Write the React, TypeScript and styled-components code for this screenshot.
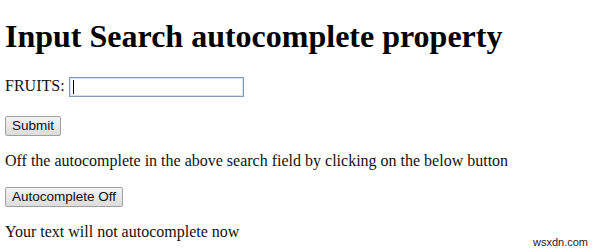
import styled, { createGlobalStyle } from "styled-components";

const GlobalStyle = createGlobalStyle`
  html, body {
    margin: 0;
    background: #fff;
  }
  body {
    font-family: "Liberation Serif", "Times New Roman", serif;
    font-size: 16px;
    color: #111;
  }
`;

const Page = styled.div`
  position: relative;
  width: 600px;
  height: 252px;
  padding: 0 5px;
  box-sizing: border-box;
  overflow: hidden;
`;

const Title = styled.h1`
  font-size: 32px;
  font-weight: bold;
  margin: 0;
  padding-top: 19px;
  line-height: 34px;
  color: #000;
`;

const Para = styled.p<{ $top: number }>`
  margin: ${({ $top }) => $top}px 0 0;
  line-height: 20px;
`;

const FieldWrap = styled.span`
  position: relative;
  display: inline-block;
  vertical-align: middle;
  line-height: 0;
`;

const Field = styled.input`
  box-sizing: border-box;
  width: 175px;
  height: 20px;
  padding: 1px 3px;
  margin: 0;
  border: 1px solid #7f9db9;
  box-shadow: inset 0 0 0 1px #d4e0ec;
  font: 13px "Liberation Sans", Arial, sans-serif;
  outline: none;
  caret-color: transparent;
`;

const Caret = styled.span`
  position: absolute;
  left: 4px;
  top: 3px;
  width: 1px;
  height: 14px;
  background: #000;
  pointer-events: none;
`;

const Button = styled.button`
  font: 13.5px "Liberation Sans", Arial, sans-serif;
  color: #111;
  background: linear-gradient(#f4f4f4, #dcdcdc);
  border: 1px solid #a0a0a0;
  border-radius: 2px;
  height: 20px;
  padding: 0 6px;
  margin: 0;
  vertical-align: middle;
`;

const Mark = styled.div`
  position: absolute;
  right: 12px;
  bottom: 4px;
  font: 11px "Liberation Sans", Arial, sans-serif;
  color: #222;
`;

export default function App() {
  return (
    <Page>
      <GlobalStyle />
      <Title>Input Search autocomplete property</Title>
      <Para $top={23}>
        FRUITS:{" "}
        <FieldWrap>
          <Field type="search" autoComplete="on" />
          <Caret />
        </FieldWrap>
      </Para>
      <Para $top={17}>
        <Button>Submit</Button>
      </Para>
      <Para $top={15}>
        Off the autocomplete in the above search field by clicking on the below button
      </Para>
      <Para $top={15}>
        <Button>Autocomplete Off</Button>
      </Para>
      <Para $top={15}>Your text will not autocomplete now</Para>
      <Mark>wsxdn.com</Mark>
    </Page>
  );
}
